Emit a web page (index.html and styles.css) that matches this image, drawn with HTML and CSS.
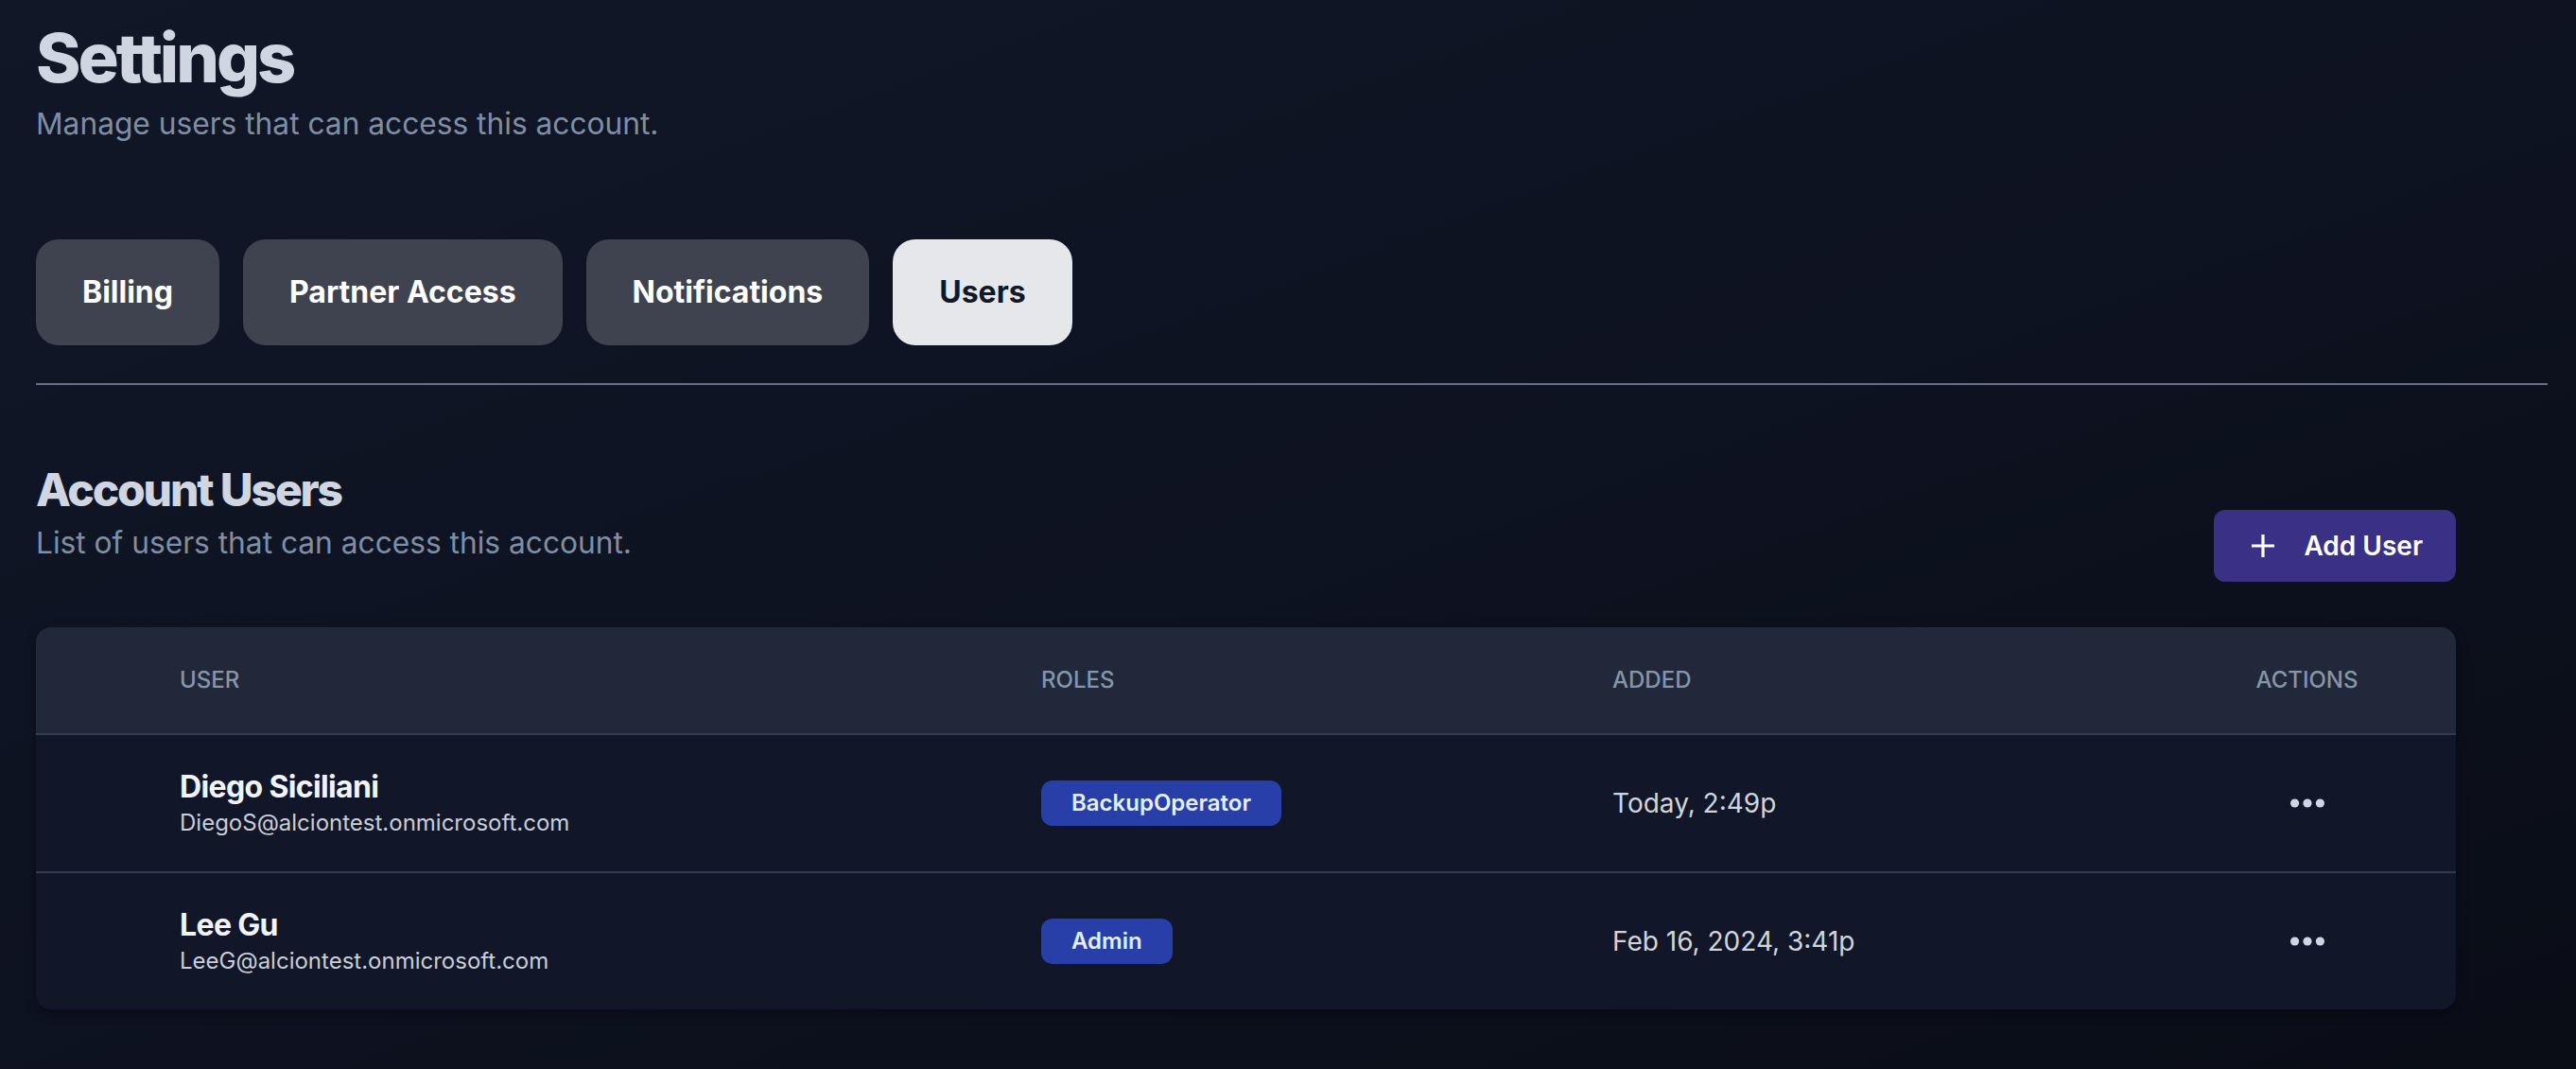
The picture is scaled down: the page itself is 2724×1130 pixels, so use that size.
FILE: index.html
```html
<!DOCTYPE html>
<html lang="en">
<head>
<meta charset="utf-8">
<title>Settings</title>
<link rel="stylesheet" href="styles.css">
</head>
<body>
<main class="page">
  <header class="page-head">
    <h1 class="page-title">Settings</h1>
    <p class="page-sub">Manage users that can access this account.</p>
  </header>

  <nav class="tabs">
    <button class="tab">Billing</button>
    <button class="tab">Partner Access</button>
    <button class="tab">Notifications</button>
    <button class="tab tab-active">Users</button>
  </nav>

  <div class="divider"></div>

  <section class="users">
    <div class="users-head">
      <div class="users-intro">
        <h2 class="users-title">Account Users</h2>
        <p class="users-sub">List of users that can access this account.</p>
      </div>
      <button class="add-btn">
        <svg class="add-icon" viewBox="0 0 28 28" width="28" height="28" aria-hidden="true">
          <path d="M14 2v24M2 14h24" stroke="#ffffff" stroke-width="3.2" fill="none"/>
        </svg>
        <span>Add User</span>
      </button>
    </div>

    <div class="table">
      <div class="row row-head">
        <div class="cell c-user th">User</div>
        <div class="cell c-roles th">Roles</div>
        <div class="cell c-added th">Added</div>
        <div class="cell c-actions th">Actions</div>
      </div>
      <div class="row">
        <div class="cell c-user">
          <div class="u-name">Diego Siciliani</div>
          <div class="u-mail">DiegoS@alciontest.onmicrosoft.com</div>
        </div>
        <div class="cell c-roles"><span class="badge">BackupOperator</span></div>
        <div class="cell c-added date">Today, 2:49p</div>
        <div class="cell c-actions">
          <svg class="dots" viewBox="0 0 36 10" width="36" height="10" aria-hidden="true">
            <circle cx="4.6" cy="5" r="4.6" fill="#cfd6e3"/>
            <circle cx="18" cy="5" r="4.6" fill="#cfd6e3"/>
            <circle cx="31.4" cy="5" r="4.6" fill="#cfd6e3"/>
          </svg>
        </div>
      </div>
      <div class="row row-sep">
        <div class="cell c-user">
          <div class="u-name">Lee Gu</div>
          <div class="u-mail">LeeG@alciontest.onmicrosoft.com</div>
        </div>
        <div class="cell c-roles"><span class="badge">Admin</span></div>
        <div class="cell c-added date">Feb 16, 2024, 3:41p</div>
        <div class="cell c-actions">
          <svg class="dots" viewBox="0 0 36 10" width="36" height="10" aria-hidden="true">
            <circle cx="4.6" cy="5" r="4.6" fill="#cfd6e3"/>
            <circle cx="18" cy="5" r="4.6" fill="#cfd6e3"/>
            <circle cx="31.4" cy="5" r="4.6" fill="#cfd6e3"/>
          </svg>
        </div>
      </div>
    </div>
  </section>
</main>
</body>
</html>
```

FILE: styles.css
```css
* { box-sizing: border-box; }

html, body {
  margin: 0;
  padding: 0;
}

body {
  width: 2724px;
  height: 1130px;
  overflow: hidden;
  font-family: Inter, "Noto Sans", "Liberation Sans", sans-serif;
  background: linear-gradient(160deg, #111727 0%, #0e1322 45%, #0a0d16 100%);
  color: #e5e7eb;
}

.page {
  padding: 21px 30px 0 38px;
}

.page-title {
  margin: 0;
  font-size: 72px;
  line-height: 80px;
  font-weight: 800;
  letter-spacing: -0.042em;
  color: #d0d6e1;
}

.page-sub {
  margin: 6px 0 0;
  font-size: 31.7px;
  line-height: 48px;
  color: #7f8ea3;
}

.tabs {
  display: flex;
  gap: 25px;
  margin-top: 98px;
}

.tab {
  border: 0;
  margin: 0;
  padding: 32px 49px;
  border-radius: 24px;
  background: #3f424f;
  color: #ffffff;
  font-family: inherit;
  font-size: 32px;
  line-height: 48px;
  font-weight: 700;
}

.tab-active {
  background: #e5e7eb;
  color: #111827;
}

.divider {
  margin-top: 40px;
  height: 2px;
  background: #666f85;
}

.users {
  margin-top: 79px;
  padding-right: 97px;
}

.users-head {
  display: flex;
  justify-content: space-between;
  align-items: flex-start;
  height: 112px;
}

.users-title {
  margin: 0;
  font-size: 48px;
  line-height: 64px;
  font-weight: 800;
  letter-spacing: -0.045em;
  color: #d0d6e1;
}

.users-sub {
  margin: 0;
  font-size: 31.7px;
  line-height: 48px;
  color: #7f8ea3;
}

.add-btn {
  margin-top: 53px;
  display: flex;
  align-items: center;
  gap: 29px;
  height: 76px;
  padding: 0 35px 0 38px;
  border: 0;
  border-radius: 12px;
  background: #3a3186;
  color: #ffffff;
  font-family: inherit;
  font-size: 28px;
  font-weight: 600;
}

.add-icon {
  display: block;
}

.table {
  margin-top: 65px;
  border-radius: 16px;
  overflow: hidden;
  background: #111729;
  box-shadow: 0 4px 12px rgba(0, 0, 0, 0.35);
}

.row {
  display: grid;
  grid-template-columns: 911px 604px 681px 107px;
  padding-left: 152px;
  padding-right: 101px;
  height: 144px;
  align-items: center;
}

.row-head {
  height: 114px;
  background: #212839;
  border-bottom: 2px solid #333c4e;
}

.row-sep {
  height: 146px;
  border-top: 2px solid #333c4e;
}

.th {
  font-size: 24px;
  line-height: 32px;
  font-weight: 500;
  text-transform: uppercase;
  color: #8595aa;
}

.c-actions {
  text-align: center;
  display: flex;
  justify-content: center;
}

.u-name {
  font-size: 32px;
  line-height: 40px;
  font-weight: 700;
  letter-spacing: -0.02em;
  color: #f1f3f7;
}

.u-mail {
  margin-top: 2px;
  font-size: 24px;
  line-height: 32px;
  color: #c9ced7;
}

.badge {
  display: inline-block;
  padding: 8px 32px;
  border-radius: 12px;
  background: #283fa9;
  color: #e3eeff;
  font-size: 24px;
  line-height: 32px;
  font-weight: 600;
}

.date {
  font-size: 28px;
  line-height: 40px;
  color: #d1d5db;
}

.dots {
  display: block;
}
```
